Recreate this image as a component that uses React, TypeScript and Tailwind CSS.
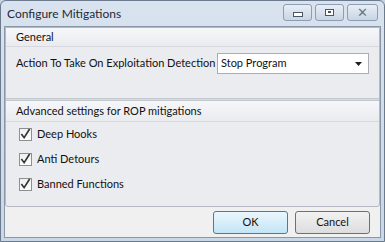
import React from 'react';

const font = { fontFamily: 'Lato, "Noto Sans", sans-serif' };

function CheckRow({ label }: { label: string }) {
  return (
    <div className="flex items-center gap-[5px] h-[25px]">
      <div className="w-[13px] h-[13px] border border-[#8e8f8f] bg-gradient-to-b from-[#f0f0f0] to-[#fdfdfd] flex items-center justify-center">
        <svg width="12" height="12" viewBox="0 0 12 12" className="mt-[-2px]">
          <path d="M1.5 6 L4.5 10 L10.5 0.5" fill="none" stroke="#333" strokeWidth="1.8" />
        </svg>
      </div>
      <span className="text-[11px] text-[#111]">{label}</span>
    </div>
  );
}

function TitleButton({ children, wide }: { children: React.ReactNode; wide?: boolean }) {
  return (
    <div
      className={`h-[17px] ${wide ? 'w-[31px]' : 'w-[29px]'} rounded-[3px] border border-[#8d9db3] bg-gradient-to-b from-[#e8eef6] to-[#c9d5e4] flex items-center justify-center`}
    >
      {children}
    </div>
  );
}

export default function App() {
  return (
    <div className="w-[385px] h-[242px] bg-[#c6d3e3]" style={font}>
      <div className="w-full h-full rounded-t-[6px] border border-[#6b7a8d] bg-gradient-to-b from-[#d9e3ef] to-[#cad7e6] flex flex-col px-[3px] pb-[3px]">
        {/* title bar */}
        <div className="h-[25px] flex items-center justify-between pl-[3px] pr-[3px]">
          <span className="text-[12px] text-[#1f2a38]">Configure Mitigations</span>
          <div className="flex gap-[3px] mt-[-3px]">
            <TitleButton>
              <div className="w-[10px] h-[5px] border border-[#4a5565] bg-white mt-[5px]" />
            </TitleButton>
            <TitleButton>
              <div className="w-[9px] h-[7px] border border-[#4a5565] bg-white flex items-center justify-center">
                <div className="w-[3px] h-[2px] bg-[#4a5565]" />
              </div>
            </TitleButton>
            <TitleButton wide>
              <span className="text-[13px] leading-none text-[#6a7684]">✕</span>
            </TitleButton>
          </div>
        </div>

        {/* client area */}
        <div className="flex-1 bg-[#f0f0f0] border border-[#8a97a8] flex flex-col">
          <div className="border border-[#b4b9c3] rounded-b-[3px] bg-[#eaecf0] flex flex-col">
            <div className="h-[19px] flex items-center px-[10px] bg-gradient-to-b from-[#f6f7f9] to-[#e9ebef] border-b border-[#d6d9df] text-[11px] text-[#111]">
              General
            </div>
            <div className="h-[51px] flex items-start pt-[6px] px-[10px] gap-[6px]">
              <span className="h-[21px] flex items-center text-[11px] text-[#111] w-[195px] whitespace-nowrap">
                Action To Take On Exploitation Detection
              </span>
              <div className="w-[153px] h-[21px] bg-white border border-[#abadb3] flex items-center justify-between pl-[3px] pr-[6px]">
                <span className="text-[11px] text-[#111]">Stop Program</span>
                <svg width="7" height="4" viewBox="0 0 7 4">
                  <path d="M0 0 H7 L3.5 4 Z" fill="#1e1e1e" />
                </svg>
              </div>
            </div>
            <div className="h-[3px] bg-[#d8dbe1] border-y border-[#c3c7ce]" />
            <div className="h-[21px] flex items-center px-[10px] bg-gradient-to-b from-[#f6f7f9] to-[#e9ebef] border-b border-[#d6d9df] text-[11px] text-[#111]">
              Advanced settings for ROP mitigations
            </div>
            <div className="flex flex-col px-[13px] pt-0 pb-[9px]">
              <CheckRow label="Deep Hooks" />
              <CheckRow label="Anti Detours" />
              <CheckRow label="Banned Functions" />
            </div>
          </div>

          <div className="flex-1 flex items-center justify-end gap-[7px] pr-[10px]">
            <button className="w-[75px] h-[23px] rounded-[3px] border border-[#3c7fb1] bg-gradient-to-b from-[#eaf6fd] to-[#c4e5f6] text-[11px] text-[#111]">
              OK
            </button>
            <button className="w-[75px] h-[23px] rounded-[3px] border border-[#707070] bg-gradient-to-b from-[#f2f2f2] to-[#dddddd] text-[11px] text-[#111]">
              Cancel
            </button>
          </div>
        </div>
      </div>
    </div>
  );
}
